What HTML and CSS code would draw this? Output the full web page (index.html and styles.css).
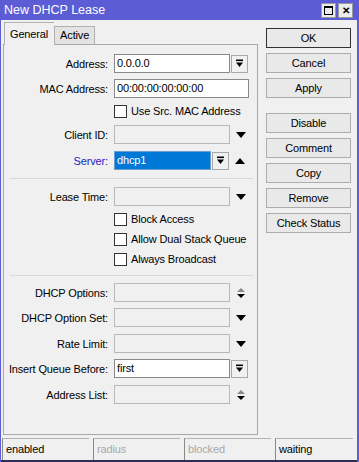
FILE: index.html
```html
<!DOCTYPE html>
<html lang="en">
<head>
  <meta charset="UTF-8">
  <title>New DHCP Lease</title>
  <link rel="stylesheet" href="styles.css">
</head>
<body>
<div class="window">
  <div class="titlebar">
    <span>New DHCP Lease</span>
    <div class="win-btns">
      <span class="wbtn"><span class="max-box"></span></span>
      <span class="wbtn close">&#x2715;</span>
    </div>
  </div>

  <div class="frame">
    <div class="main">
      <div class="left">
        <div class="tabs">
          <div class="tab current">General</div>
          <div class="tab">Active</div>
        </div>

        <div class="panel">
          <div class="row first">
            <label>Address:</label>
            <div class="field on w116">0.0.0.0</div>
            <span class="dbtn"><svg width="9" height="9" viewBox="0 0 9 9"><rect x="1" y="0.5" width="7" height="1.6"/><path d="M1 3.5h7L4.5 8z"/></svg></span>
          </div>
          <div class="row">
            <label>MAC Address:</label>
            <div class="field on w135">00:00:00:00:00:00</div>
          </div>
          <div class="check">
            <span class="box"></span>Use Src. MAC Address
          </div>
          <div class="row">
            <label>Client ID:</label>
            <div class="field w116"></div>
            <span class="arrow"><svg width="10" height="6" viewBox="0 0 10 6"><path d="M0 0h10L5 6z"/></svg></span>
          </div>
          <div class="row mt7">
            <label class="blue">Server:</label>
            <div class="field sel w97">dhcp1</div>
            <span class="dbtn"><svg width="9" height="9" viewBox="0 0 9 9"><rect x="1" y="0.5" width="7" height="1.6"/><path d="M1 3.5h7L4.5 8z"/></svg></span>
            <span class="arrow"><svg width="10" height="6" viewBox="0 0 10 6"><path d="M0 6h10L5 0z"/></svg></span>
          </div>

          <div class="sep"></div>

          <div class="row lease">
            <label>Lease Time:</label>
            <div class="field w116"></div>
            <span class="arrow"><svg width="10" height="6" viewBox="0 0 10 6"><path d="M0 0h10L5 6z"/></svg></span>
          </div>
          <div class="check">
            <span class="box"></span>Block Access
          </div>
          <div class="check tight">
            <span class="box"></span>Allow Dual Stack Queue
          </div>
          <div class="check tight">
            <span class="box"></span>Always Broadcast
          </div>

          <div class="sep"></div>

          <div class="row mt7">
            <label>DHCP Options:</label>
            <div class="field w116"></div>
            <span class="arrow"><svg width="10" height="12" viewBox="0 0 10 12"><path d="M1 5h8L5 1z" fill="#8a8a8a"/><path d="M1 7h8L5 11z"/></svg></span>
          </div>
          <div class="row">
            <label>DHCP Option Set:</label>
            <div class="field w116"></div>
            <span class="arrow"><svg width="10" height="6" viewBox="0 0 10 6"><path d="M0 0h10L5 6z"/></svg></span>
          </div>
          <div class="row mt7">
            <label>Rate Limit:</label>
            <div class="field w116"></div>
            <span class="arrow"><svg width="10" height="6" viewBox="0 0 10 6"><path d="M0 0h10L5 6z"/></svg></span>
          </div>
          <div class="row">
            <label>Insert Queue Before:</label>
            <div class="field on w116">first</div>
            <span class="dbtn"><svg width="9" height="9" viewBox="0 0 9 9"><rect x="1" y="0.5" width="7" height="1.6"/><path d="M1 3.5h7L4.5 8z"/></svg></span>
          </div>
          <div class="row mt7">
            <label>Address List:</label>
            <div class="field w116"></div>
            <span class="arrow"><svg width="10" height="12" viewBox="0 0 10 12"><path d="M1 5h8L5 1z" fill="#8a8a8a"/><path d="M1 7h8L5 11z"/></svg></span>
          </div>
        </div>
      </div>

      <div class="side">
        <button class="default">OK</button>
        <button>Cancel</button>
        <button>Apply</button>
        <button class="gap">Disable</button>
        <button>Comment</button>
        <button>Copy</button>
        <button>Remove</button>
        <button>Check Status</button>
      </div>
    </div>

    <div class="status">
      <div class="cell">enabled</div>
      <div class="cell off">radius</div>
      <div class="cell off">blocked</div>
      <div class="cell last">waiting</div>
    </div>
  </div>
</div>
</body>
</html>
```

FILE: styles.css
```css
body {
  margin: 0;
  font-family: "Liberation Sans", Arial, sans-serif;
  font-size: 11px;
  letter-spacing: -0.15px;
  color: #000;
}

.window {
  width: 359px;
  height: 462px;
  background: #5c5cd5;
  display: flex;
  flex-direction: column;
}

.titlebar {
  height: 20px;
  flex: none;
  display: flex;
  align-items: center;
  justify-content: space-between;
  padding: 0 6px 0 4px;
  color: #fff;
  font-size: 12.5px;
  letter-spacing: 0;
}

.win-btns {
  display: flex;
  gap: 2px;
}

.wbtn {
  width: 13px;
  height: 13px;
  background: #ececec;
  border: 1px solid #9a9a9a;
  display: flex;
  align-items: center;
  justify-content: center;
  color: #000;
  font-size: 10px;
  font-weight: bold;
}

.max-box {
  width: 7px;
  height: 6px;
  border: 1px solid #000;
  border-top-width: 2px;
}

.frame {
  flex: 1;
  margin: 0 2px 0 1px;
  background: #f0f0f0;
  border-bottom: 2px solid #2e2e55;
  display: flex;
  flex-direction: column;
}

.main {
  display: flex;
  height: 418px;
}

.left {
  width: 255px;
  margin-left: 2px;
  padding-top: 2px;
}

.tabs {
  display: flex;
  height: 22px;
  padding-left: 1px;
  align-items: flex-end;
}

.tab {
  height: 17px;
  padding: 0 5px;
  line-height: 17px;
  background: #e3e3e3;
  border: 1px solid #b0b0b0;
  border-bottom: none;
}

.tab.current {
  height: 22px;
  line-height: 22px;
  background: #f0f0f0;
  position: relative;
  top: 1px;
  z-index: 1;
  border-right: none;
  padding-right: 6px;
}

.panel {
  height: 391px;
  box-sizing: border-box;
  border: 1px solid #a8a8a8;
  padding-top: 9px;
}

.row {
  display: flex;
  align-items: center;
  height: 19px;
  margin-top: 6px;
}

.row.first { margin-top: 0; }
.row.mt7 { margin-top: 7px; }
.row.lease { margin-top: 8px; }

.row label {
  width: 104px;
  text-align: right;
  margin-right: 6px;
}

.blue { color: #2323c4; }

.field {
  height: 19px;
  box-sizing: border-box;
  border: 1px solid #b8b8b8;
  background: #f0f0f0;
  padding: 0 2px;
  line-height: 17px;
}

.field.on {
  background: #fff;
  border-color: #8a8a8a;
}

.field.sel {
  background: #0078d7;
  border-color: #6a9fd0;
  color: #fff;
}

.w97 { width: 97px; }
.w116 { width: 116px; }
.w135 { width: 135px; }

.dbtn {
  width: 17px;
  height: 18px;
  box-sizing: border-box;
  margin-left: 1px;
  border: 1px solid #a8a8a8;
  background: #f0f0f0;
  display: flex;
  align-items: center;
  justify-content: center;
}

.arrow {
  width: 18px;
  margin-left: 2px;
  display: flex;
  justify-content: center;
}

.check {
  display: flex;
  align-items: center;
  height: 16px;
  margin-top: 5px;
  padding-left: 110px;
}

.check.tight { margin-top: 4px; }

.box {
  width: 13px;
  height: 13px;
  box-sizing: border-box;
  border: 1px solid #333;
  background: #fff;
  margin-right: 4px;
}

.sep {
  height: 1px;
  background: #d8d8d8;
  margin: 8px 4px 0 6px;
}

.side {
  width: 85px;
  margin-left: 8px;
  padding-top: 8px;
  display: flex;
  flex-direction: column;
  gap: 5px;
}

button {
  height: 20px;
  padding: 0;
  font-family: inherit;
  font-size: 11px;
  letter-spacing: -0.15px;
  color: #000;
  background: #e9e9e9;
  border: 1px solid #adadad;
}

button.default {
  border-color: #333;
}

button.gap {
  margin-top: 10px;
}

.status {
  display: flex;
  gap: 4px;
  height: 22px;
  padding-left: 1px;
}

.cell {
  width: 87px;
  box-sizing: border-box;
  border-top: 1px solid #b4b4b4;
  border-left: 1px solid #8a8a8a;
  padding-left: 3px;
  line-height: 20px;
}

.cell.off { color: #a8a8a8; }
.cell.last { width: 78px; }
```
